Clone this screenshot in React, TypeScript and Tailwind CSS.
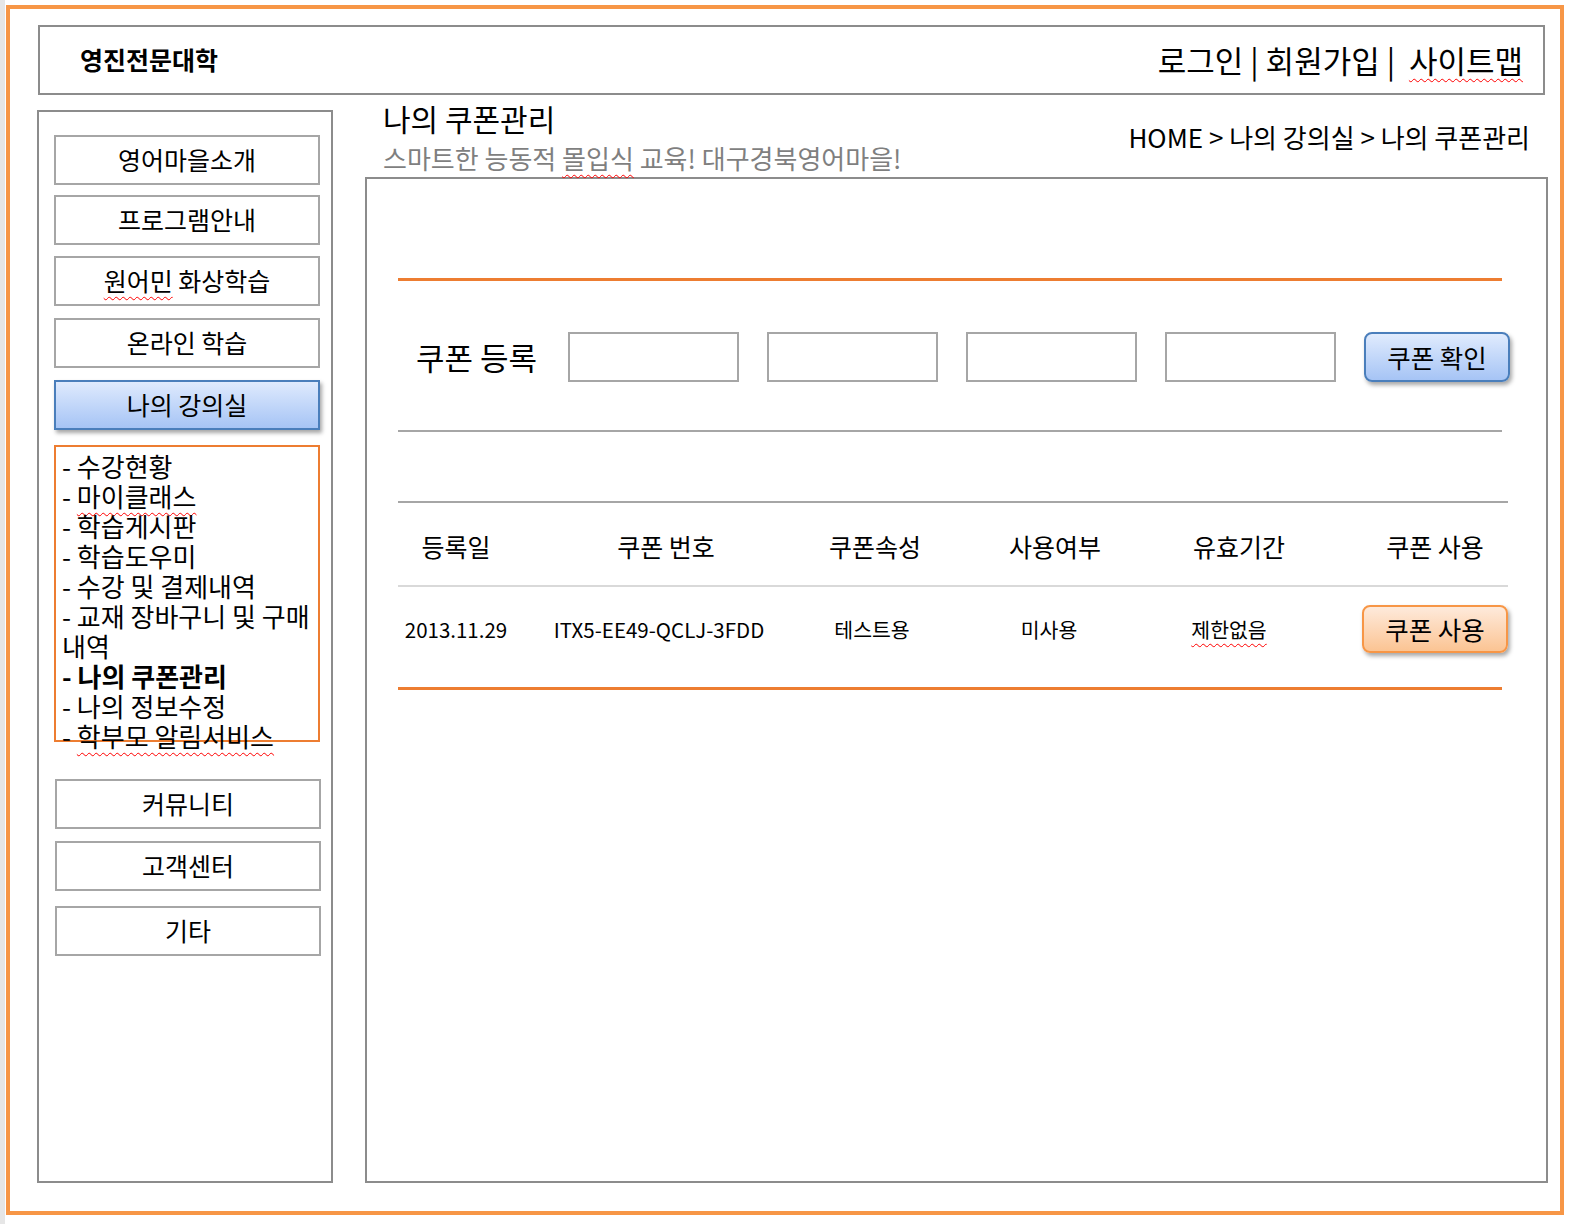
const sideTop = [
  { label: "영어마을소개", mt: "mt-0" },
  { label: "프로그램안내", mt: "mt-[10px]" },
  { label: "원어민 화상학습", mt: "mt-[11px]", wavy: "원어민" },
  { label: "온라인 학습", mt: "mt-[12px]" },
];

const subMenu = [
  { text: "수강현황" },
  { text: "마이클래스", wavy: true },
  { text: "학습게시판" },
  { text: "학습도우미" },
  { text: "수강 및 결제내역" },
  { text: "교재 장바구니 및 구매" },
  { text: "내역", noDash: true },
  { text: "나의 쿠폰관리", bold: true },
  { text: "나의 정보수정" },
  { text: "학부모 알림서비스", wavy: true },
];

const wavy = "underline decoration-wavy decoration-[#ff0000] decoration-1 underline-offset-[5px]";

function SideButton({ label, className }: { label: React.ReactNode; className: string }) {
  return (
    <div
      className={`h-[50px] w-[266px] border-2 border-[#a6a6a6] flex items-center justify-center text-[25px] text-black ${className}`}
    >
      {label}
    </div>
  );
}

function Sidebar() {
  return (
    <aside className="w-[296px] h-[1073px] border-2 border-[#8c8c8c] pl-[15px] pt-[23px] shrink-0">
      {sideTop.map((b) => (
        <SideButton
          key={b.label}
          className={b.mt}
          label={
            b.wavy ? (
              <span>
                <span className={wavy}>{b.wavy}</span>
                {b.label.slice(b.wavy.length)}
              </span>
            ) : (
              b.label
            )
          }
        />
      ))}

      {/* current section */}
      <div className="mt-[12px] h-[50px] w-[266px] border-2 border-[#4a7ebb] bg-linear-to-b from-[#dfeafd] to-[#a6c4f5] shadow-[2px_3px_4px_rgba(0,0,0,0.35)] flex items-center justify-center text-[25px]">
        나의 강의실
      </div>

      {/* sub menu */}
      <div className="mt-[15px] h-[297px] w-[266px] border-2 border-[#ed7d31] pl-[6px] pt-[4px] text-[26px] leading-[30px] text-black">
        {subMenu.map((m) => (
          <div key={m.text} className={`whitespace-nowrap ${m.bold ? "font-bold" : ""}`}>
            {m.noDash ? "" : "- "}
            <span className={m.wavy ? wavy : ""}>{m.text}</span>
          </div>
        ))}
      </div>

      <SideButton label="커뮤니티" className="mt-[37px] w-[265px] ml-[1px]" />
      <SideButton label="고객센터" className="mt-[12px] w-[265px] ml-[1px]" />
      <SideButton label="기타" className="mt-[15px] w-[265px] ml-[1px]" />
    </aside>
  );
}

function CouponRegister() {
  return (
    <div className="mt-[51px] flex items-center h-[50px] pl-[18px]">
      <div className="w-[152px] text-[31px] text-black">쿠폰 등록</div>
      {[0, 1, 2, 3].map((i) => (
        <input
          key={i}
          className={`h-[50px] w-[171px] border-2 border-[#a6a6a6] bg-white outline-none ${i > 0 ? "ml-[28px]" : ""}`}
        />
      ))}
      <button className="ml-[28px] h-[50px] w-[146px] rounded-[8px] border-2 border-[#4a7ebb] bg-linear-to-b from-[#e0ebfd] to-[#a6c4f5] shadow-[2px_3px_4px_rgba(0,0,0,0.35)] text-[25.5px] text-black">
        쿠폰 확인
      </button>
    </div>
  );
}

function CouponTable() {
  const cols = "grid grid-cols-[116px_304px_114px_246px_122px_1fr]";
  return (
    <div className="w-[1110px]">
      <div className="h-[2px] bg-[#a6a6a6]" />
      <div className={`${cols} h-[82px] items-center pt-[5px] text-[25px] text-black`}>
        <div className="text-center">등록일</div>
        <div className="text-center">쿠폰 번호</div>
        <div className="text-center">쿠폰속성</div>
        <div className="text-center">사용여부</div>
        <div className="text-center">유효기간</div>
        <div className="justify-self-end w-[146px] text-center">쿠폰 사용</div>
      </div>
      <div className="h-[2px] bg-[#d9d9d9]" />
      <div className={`${cols} mt-[18px] h-[48px] items-center text-[20.5px] text-black`}>
        <div className="text-center">2013.11.29</div>
        <div className="text-center pr-[14px]">ITX5-EE49-QCLJ-3FDD</div>
        <div className="text-center pr-[6px]">테스트용</div>
        <div className="text-center pr-[12px]">미사용</div>
        <div className="text-center pr-[20px]">
          <span className={wavy}>제한없음</span>
        </div>
        <button className="justify-self-end h-[48px] w-[146px] rounded-[8px] border-2 border-[#f79646] bg-linear-to-b from-[#feeadb] to-[#fbc493] shadow-[2px_3px_4px_rgba(0,0,0,0.35)] text-[25.5px] text-black">
          쿠폰 사용
        </button>
      </div>
      <div className="mt-[34px] h-[3px] w-[1104px] bg-[#ed7d31]" />
    </div>
  );
}

function Main() {
  return (
    <main className="w-[1183px] shrink-0">
      {/* title + breadcrumb */}
      <div className="h-[82px] flex justify-between items-center -mt-[15px]">
        <div className="pl-[18px] pt-[1px]">
          <h1 className="text-[30px] leading-[32px] text-black">나의 쿠폰관리</h1>
          <p className="mt-[10px] text-[26px] leading-[28px] text-[#7f7f7f]">
            스마트한 능동적 <span className={wavy}>몰입식</span> 교육! 대구경북영어마을!
          </p>
        </div>
        <div className="pr-[18px] text-[26px] text-black">HOME &gt; 나의 강의실 &gt; 나의 쿠폰관리</div>
      </div>

      <div className="h-[1006px] border-2 border-[#8c8c8c] pl-[31px] pt-[99px]">
        <div className="h-[3px] w-[1104px] bg-[#ed7d31]" />
        <CouponRegister />
        <div className="mt-[48px] h-[2px] w-[1104px] bg-[#a6a6a6]" />
        <div className="mt-[69px]">
          <CouponTable />
        </div>
      </div>
    </main>
  );
}

export default function App() {
  return (
    <div className="w-[1572px] h-[1224px] bg-white border-l-[5px] border-l-[#e6e6e6] pl-[1px] pt-[5px] font-['Noto_Sans_CJK_KR','Noto_Sans',sans-serif]">
      <div className="w-[1558px] h-[1210px] border-4 border-[#f79646] pl-[27px] pt-[16px]">
        {/* top bar */}
        <header className="ml-[1px] w-[1507px] h-[70px] border-2 border-[#8c8c8c] flex items-center justify-between pl-[40px] pr-[20px]">
          <div className="text-[25px] font-bold text-black">영진전문대학</div>
          <div className="text-[31px] text-black whitespace-pre">
            로그인 | 회원가입 |  <span className={wavy}>사이트맵</span>
          </div>
        </header>

        <div className="mt-[15px] flex gap-[32px] items-start">
          <Sidebar />
          <Main />
        </div>
      </div>
    </div>
  );
}
